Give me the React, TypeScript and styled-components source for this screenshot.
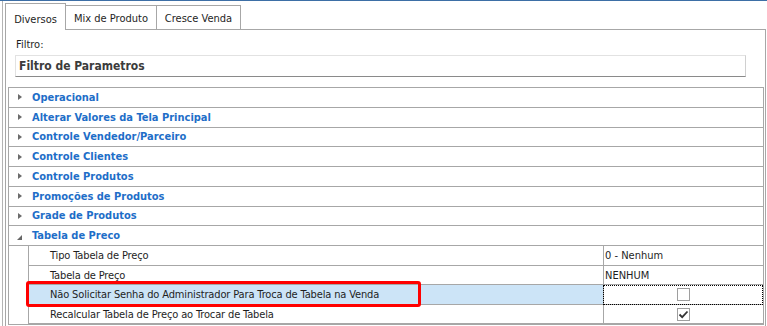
import React from "react"
import styled, { createGlobalStyle } from "styled-components"

const lineColor = "#a7a7a7"
const blue = "#1e6ec8"

const GlobalStyle = createGlobalStyle`
    html, body {
        margin: 0;
        padding: 0;
        background: #fff;
    }
    body {
        font-family: "DejaVu Sans Condensed", "DejaVu Sans", "Liberation Sans", sans-serif;
        font-stretch: condensed;
        font-size: 11px;
        color: #1e1e1e;
    }
`

const Screen = styled.div`
    position: relative;
    width: 767px;
    height: 326px;
    overflow: hidden;
    box-sizing: border-box;
    border-top: 1px solid #3d6fa6;
    padding-left: 2px;
    display: flex;
`

const Frame = styled.div`
    flex: 1;
    display: flex;
    border-left: 1px solid #b4b4b4;
    padding: 0 1px 0 2px;
`

const TabControl = styled.div`
    flex: 1;
    display: flex;
    flex-direction: column;
`

const TabStrip = styled.div`
    display: flex;
    align-items: flex-end;
    height: 29px;
`

const Tab = styled.div<{ $active?: boolean; $width: number; $first?: boolean }>`
    box-sizing: border-box;
    width: ${p => p.$width}px;
    height: ${p => (p.$active ? 27 : 25)}px;
    display: flex;
    justify-content: center;
    align-items: center;
    padding-top: ${p => (p.$active ? 5 : 2)}px;
    background: #fff;
    border-top: 1px solid ${lineColor};
    border-right: 1px solid ${lineColor};
    border-left: ${p => (p.$first ? `1px solid ${lineColor}` : "none")};
    border-bottom: ${p => (p.$active ? "none" : `1px solid ${lineColor}`)};
    white-space: nowrap;
`

const TabFiller = styled.div`
    flex: 1;
    height: 0;
    border-bottom: 1px solid ${lineColor};
    border-right: 1px solid ${lineColor};
`

const Panel = styled.div`
    flex: 1;
    display: flex;
    flex-direction: column;
    border-left: 1px solid ${lineColor};
    border-right: 1px solid ${lineColor};
`

const FilterLabel = styled.div`
    margin: 8px 0 0 10px;
    line-height: 14px;
    height: 14px;
`

const FilterInput = styled.div`
    box-sizing: border-box;
    margin: 3px 0 0 9px;
    width: 731px;
    height: 22px;
    display: flex;
    align-items: center;
    padding-left: 3px;
    border: 1px solid #e2e2e2;
    border-right-color: #d0d0d0;
    border-bottom-color: #8a8a8a;
    font-size: 12px;
    font-weight: bold;
    color: #3c3c3c;
`

const Grid = styled.div`
    margin: 10px 1px 0 2px;
    border: 1px solid ${lineColor};
    display: flex;
    flex-direction: column;
`

const CategoryRow = styled.div`
    box-sizing: border-box;
    height: 19.75px;
    display: flex;
    align-items: center;
    padding-left: 9px;
    border-bottom: 1px solid ${lineColor};
    font-weight: bold;
    color: ${blue};
    white-space: nowrap;
`

const Arrow = styled.span<{ $open?: boolean }>`
    width: 0;
    height: 0;
    flex: none;
    ${p =>
        p.$open
            ? `
        margin: 4px 10px 0 -1px;
        border-left: 5px solid transparent;
        border-bottom: 5px solid #666;
    `
            : `
        margin-right: 10px;
        border-left: 4px solid #6b6b6b;
        border-top: 3.5px solid transparent;
        border-bottom: 3.5px solid transparent;
    `}
`

const ChildRow = styled.div`
    display: grid;
    grid-template-columns: 19px 575px 160px;
    height: 19.5px;
`

const Cell = styled.div`
    box-sizing: border-box;
    display: flex;
    align-items: center;
    padding-top: 1px;
    border-left: 1px solid ${lineColor};
    border-bottom: 1px solid ${lineColor};
    white-space: nowrap;
`

const LabelCell = styled(Cell)<{ $selected?: boolean }>`
    padding-left: 21px;
    letter-spacing: -0.14px;
    background: ${p => (p.$selected ? "#cce4f7" : "#fff")};
`

const ValueCell = styled(Cell)<{ $focused?: boolean; $center?: boolean }>`
    padding-left: 1px;
    justify-content: ${p => (p.$center ? "center" : "flex-start")};
    outline: ${p => (p.$focused ? "1px dotted #000" : "none")};
    outline-offset: -1px;
`

const CheckBox = styled.span`
    box-sizing: border-box;
    width: 13px;
    height: 13px;
    margin-right: 1px;
    border: 1px solid #9e9e9e;
    background: #fff;
    display: flex;
    align-items: center;
    justify-content: center;
`

const Highlight = styled.div`
    position: absolute;
    left: 26px;
    top: 280px;
    width: 395px;
    height: 26px;
    box-sizing: border-box;
    border: 3px solid #ff0000;
    border-radius: 3px;
    pointer-events: none;
`

const categories = [
    "Operacional",
    "Alterar Valores da Tela Principal",
    "Controle Vendedor/Parceiro",
    "Controle Clientes",
    "Controle Produtos",
    "Promoções de Produtos",
    "Grade de Produtos",
]

type Param = { label: string; value?: string; check?: boolean; selected?: boolean }

const params: Param[] = [
    { label: "Tipo Tabela de Preço", value: "0 - Nenhum" },
    { label: "Tabela de Preço", value: "NENHUM" },
    { label: "Não Solicitar Senha do Administrador Para Troca de Tabela na Venda", check: false, selected: true },
    { label: "Recalcular Tabela de Preço ao Trocar de Tabela", check: true },
]

const Check = ({ checked }: { checked: boolean }) => (
    <CheckBox>
        {checked && (
            <svg width="11" height="11" viewBox="0 0 11 11">
                <path d="M1.5 5.5 L4.2 8.2 L9.5 2.5" fill="none" stroke="#333" strokeWidth="1.8" />
            </svg>
        )}
    </CheckBox>
)

const App = () => {
    return (
        <Screen>
            <GlobalStyle />
            <Frame>
                <TabControl>
                    <TabStrip>
                        <Tab $active $first $width={61}>Diversos</Tab>
                        <Tab $width={91}>Mix de Produto</Tab>
                        <Tab $width={84}>Cresce Venda</Tab>
                        <TabFiller />
                    </TabStrip>
                    <Panel>
                        <FilterLabel>Filtro:</FilterLabel>
                        <FilterInput>Filtro de Parametros</FilterInput>
                        <Grid>
                            {categories.map(c => (
                                <CategoryRow key={c}>
                                    <Arrow />
                                    {c}
                                </CategoryRow>
                            ))}
                            <CategoryRow>
                                <Arrow $open />
                                Tabela de Preco
                            </CategoryRow>
                            {params.map(p => (
                                <ChildRow key={p.label}>
                                    <div />
                                    <LabelCell $selected={p.selected}>{p.label}</LabelCell>
                                    <ValueCell $focused={p.selected} $center={p.check !== undefined}>
                                        {p.check !== undefined ? <Check checked={p.check} /> : p.value}
                                    </ValueCell>
                                </ChildRow>
                            ))}
                        </Grid>
                    </Panel>
                </TabControl>
            </Frame>
            <Highlight />
        </Screen>
    )
}

export default App
